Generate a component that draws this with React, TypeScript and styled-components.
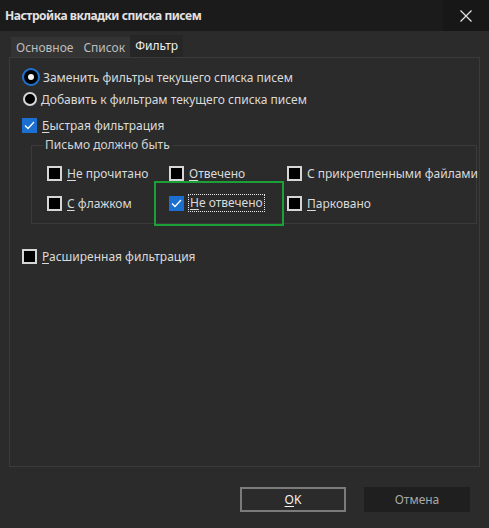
import styled, { createGlobalStyle } from "styled-components";

const GlobalStyle = createGlobalStyle`
  html, body {
    margin: 0;
    padding: 0;
    background: #2b2b2b;
  }
  body {
    font-family: "Noto Sans", "Open Sans", sans-serif;
    font-size: 12px;
    color: #dadada;
  }
`;

const Window = styled.div`
  width: 489px;
  height: 528px;
  display: flex;
  flex-direction: column;
  background: #2b2b2b;
  overflow: hidden;
`;

const TitleBar = styled.div`
  height: 31px;
  display: flex;
  align-items: center;
  background: #1b1b1b;
  flex-shrink: 0;
`;

const Title = styled.div`
  flex: 1;
  padding-left: 5px;
  font-weight: 700;
  font-size: 12px;
  color: #e2e2e2;
  letter-spacing: -0.45px;
`;

const CloseButton = styled.div`
  width: 46px;
  height: 31px;
  display: flex;
  align-items: center;
  justify-content: center;
  background: #171717;
`;

const Body = styled.div`
  padding: 4px 9px 0 9px;
  display: flex;
  flex-direction: column;
`;

const TabStrip = styled.div`
  display: flex;
  align-items: flex-end;
  height: 22px;
  margin-left: 2px;
`;

const Tab = styled.div<{ $active?: boolean }>`
  height: ${(p) => (p.$active ? 22 : 20)}px;
  display: flex;
  align-items: center;
  padding: 0 5px;
  background: ${(p) => (p.$active ? "#262626" : "#343434")};
  color: ${(p) => (p.$active ? "#f0f0f0" : "#bdbdbd")};
  padding-bottom: ${(p) => (p.$active ? 2 : 0)}px;
  box-sizing: border-box;
`;

const TabPanel = styled.div`
  height: 410px;
  box-sizing: border-box;
  border: 1px solid #3b3b3b;
  padding: 8px 12px 0 12px;
  display: flex;
  flex-direction: column;
`;

const OptionRow = styled.label<{ $indent?: number; $top?: number }>`
  display: flex;
  align-items: center;
  height: 22px;
  gap: 4px;
  margin-left: ${(p) => p.$indent ?? 0}px;
  margin-top: ${(p) => p.$top ?? 0}px;
  white-space: nowrap;
`;

const Radio = styled.span<{ $checked?: boolean }>`
  width: 14px;
  height: 14px;
  box-sizing: border-box;
  border-radius: 50%;
  flex-shrink: 0;
  background: ${(p) => (p.$checked ? "#f4f4f4" : "#000")};
  border: ${(p) => (p.$checked ? "4px solid #000" : "2px solid #d6d6d6")};
  box-shadow: ${(p) => (p.$checked ? "0 0 0 2px #1e73d2" : "none")};
  margin: ${(p) => (p.$checked ? "0 1px" : "0 0")};
`;

const Box = styled.span<{ $checked?: boolean }>`
  width: 15px;
  height: 15px;
  box-sizing: border-box;
  flex-shrink: 0;
  display: flex;
  align-items: center;
  justify-content: center;
  background: ${(p) => (p.$checked ? "#1a6fd0" : "#000")};
  border: ${(p) => (p.$checked ? "none" : "2px solid #d6d6d6")};
  margin-right: 1px;
`;

const Key = styled.span`
  text-decoration: underline;
  text-underline-offset: 2px;
`;

const Group = styled.fieldset`
  margin: 2px 0 0 9px;
  width: 446px;
  box-sizing: border-box;
  border: 1px solid #3a3a3a;
  padding: 0 0 5px 0;
  min-width: 0;
`;

const Legend = styled.legend`
  margin-left: 11px;
  padding: 0 2px;
  line-height: 14px;
  color: #d4d4d4;
`;

const GroupGrid = styled.div`
  display: grid;
  grid-template-columns: 122px 118px 1fr;
  grid-auto-rows: 30px;
  padding-left: 15px;
  margin-top: 6px;
`;

const Cell = styled.label<{ $highlight?: boolean }>`
  position: relative;
  display: flex;
  align-items: center;
  gap: 4px;
  white-space: nowrap;
  ${(p) =>
    p.$highlight &&
    `
    &::before {
      content: "";
      position: absolute;
      left: -15px;
      top: -7px;
      right: 3px;
      bottom: -8px;
      border: 2px solid #1aa036;
      pointer-events: none;
    }
  `}
`;

const Focused = styled.span`
  outline: 1px dotted #e8e8e8;
  outline-offset: 0;
  padding: 0 1px;
  line-height: 16px;
`;

const Footer = styled.div`
  display: flex;
  justify-content: flex-end;
  gap: 18px;
  padding: 20px 10px 0 0;
`;

const Button = styled.div<{ $primary?: boolean }>`
  width: 106px;
  height: 25px;
  box-sizing: border-box;
  display: flex;
  align-items: center;
  justify-content: center;
  background: ${(p) => (p.$primary ? "#2b2b2b" : "#1f1f1f")};
  border: ${(p) => (p.$primary ? "2px solid #7b7b7b" : "none")};
  color: ${(p) => (p.$primary ? "#f2f2f2" : "#a8a8a8")};
`;

const Check = () => (
  <svg width="11" height="9" viewBox="0 0 11 9">
    <path d="M1 4.5 L4 7.5 L10 1" fill="none" stroke="#fff" strokeWidth="1.3" />
  </svg>
);

const App = () => {
  return (
    <Window>
      <GlobalStyle />
      <TitleBar>
        <Title>Настройка вкладки списка писем</Title>
        <CloseButton>
          <svg width="12" height="12" viewBox="0 0 12 12">
            <path d="M0.5 0.5 L11.5 11.5 M11.5 0.5 L0.5 11.5" stroke="#e6e6e6" strokeWidth="1.2" />
          </svg>
        </CloseButton>
      </TitleBar>
      <Body>
        <TabStrip>
          <Tab>Основное</Tab>
          <Tab>Список</Tab>
          <Tab $active>Фильтр</Tab>
        </TabStrip>
        <TabPanel>
          <OptionRow $indent={1}>
            <Radio $checked />
            Заменить фильтры текущего списка писем
          </OptionRow>
          <OptionRow $indent={1}>
            <Radio />
            Добавить к фильтрам текущего списка писем
          </OptionRow>
          <OptionRow $top={4}>
            <Box $checked>
              <Check />
            </Box>
            <span>
              <Key>Б</Key>ыстрая фильтрация
            </span>
          </OptionRow>
          <Group>
            <Legend>Письмо должно быть</Legend>
            <GroupGrid>
              <Cell>
                <Box />
                <span>
                  <Key>Н</Key>е прочитано
                </span>
              </Cell>
              <Cell>
                <Box />
                <span>
                  <Key>О</Key>твечено
                </span>
              </Cell>
              <Cell>
                <Box />
                <span>С прикрепленными файлами</span>
              </Cell>
              <Cell>
                <Box />
                <span>
                  <Key>С</Key> флажком
                </span>
              </Cell>
              <Cell $highlight>
                <Box $checked>
                  <Check />
                </Box>
                <Focused>
                  <Key>Н</Key>е отвечено
                </Focused>
              </Cell>
              <Cell>
                <Box />
                <span>
                  <Key>П</Key>арковано
                </span>
              </Cell>
            </GroupGrid>
          </Group>
          <OptionRow $top={21}>
            <Box />
            <span>
              <Key>Р</Key>асширенная фильтрация
            </span>
          </OptionRow>
        </TabPanel>
        <Footer>
          <Button $primary>
            <span>
              <Key>O</Key>K
            </span>
          </Button>
          <Button>Отмена</Button>
        </Footer>
      </Body>
    </Window>
  );
};

export default App;
